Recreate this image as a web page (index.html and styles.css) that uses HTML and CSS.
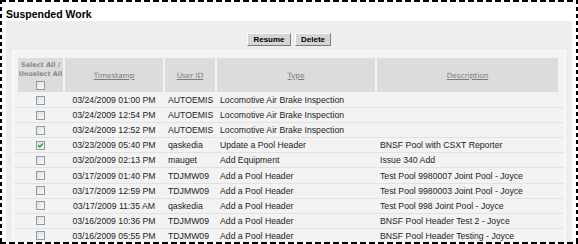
FILE: index.html
```html
<!DOCTYPE html>
<html>
<head>
<meta charset="utf-8">
<link rel="stylesheet" href="styles.css">
</head>
<body>
<div class="frame">
  <h1 class="title">Suspended Work</h1>
  <div class="panel">
    <div class="actions">
      <button class="btn btn-resume">Resume</button>
      <button class="btn btn-delete">Delete</button>
    </div>
    <div class="grid-box">
      <div class="row head">
        <div class="hcell hsel">
          <span class="sel-label">Select All /<br>Unselect All</span>
          <span class="cb"></span>
        </div>
        <div class="hcell"><a class="sort">Timestamp</a></div>
        <div class="hcell"><a class="sort">User ID</a></div>
        <div class="hcell"><a class="sort">Type</a></div>
        <div class="hcell"><a class="sort">Description</a></div>
      </div>
      <div class="row data"><div class="c-cb"><span class="cb"></span></div><div class="c-ts">03/24/2009 01:00 PM</div><div class="c-tx">AUTOEMIS</div><div class="c-tx">Locomotive Air Brake Inspection</div><div class="c-tx"></div></div>
      <div class="row data"><div class="c-cb"><span class="cb"></span></div><div class="c-ts">03/24/2009 12:54 PM</div><div class="c-tx">AUTOEMIS</div><div class="c-tx">Locomotive Air Brake Inspection</div><div class="c-tx"></div></div>
      <div class="row data"><div class="c-cb"><span class="cb"></span></div><div class="c-ts">03/24/2009 12:52 PM</div><div class="c-tx">AUTOEMIS</div><div class="c-tx">Locomotive Air Brake Inspection</div><div class="c-tx"></div></div>
      <div class="row data"><div class="c-cb"><span class="cb checked"><svg viewBox="0 0 7 7" width="7" height="7"><path d="M1 3.2 L2.8 5 L6 1.6" fill="none" stroke="#2a9a2a" stroke-width="1.4"/></svg></span></div><div class="c-ts">03/23/2009 05:40 PM</div><div class="c-tx">qaskedia</div><div class="c-tx">Update a Pool Header</div><div class="c-tx">BNSF Pool with CSXT Reporter</div></div>
      <div class="row data"><div class="c-cb"><span class="cb"></span></div><div class="c-ts">03/20/2009 02:13 PM</div><div class="c-tx">mauget</div><div class="c-tx">Add Equipment</div><div class="c-tx">Issue 340 Add</div></div>
      <div class="row data"><div class="c-cb"><span class="cb"></span></div><div class="c-ts">03/17/2009 01:40 PM</div><div class="c-tx">TDJMW09</div><div class="c-tx">Add a Pool Header</div><div class="c-tx">Test Pool 9980007 Joint Pool - Joyce</div></div>
      <div class="row data"><div class="c-cb"><span class="cb"></span></div><div class="c-ts">03/17/2009 12:59 PM</div><div class="c-tx">TDJMW09</div><div class="c-tx">Add a Pool Header</div><div class="c-tx">Test Pool 9980003 Joint Pool - Joyce</div></div>
      <div class="row data"><div class="c-cb"><span class="cb"></span></div><div class="c-ts">03/17/2009 11:35 AM</div><div class="c-tx">qaskedia</div><div class="c-tx">Add a Pool Header</div><div class="c-tx">Test Pool 998 Joint Pool - Joyce</div></div>
      <div class="row data"><div class="c-cb"><span class="cb"></span></div><div class="c-ts">03/16/2009 10:36 PM</div><div class="c-tx">TDJMW09</div><div class="c-tx">Add a Pool Header</div><div class="c-tx">BNSF Pool Header Test 2 - Joyce</div></div>
      <div class="row data"><div class="c-cb"><span class="cb"></span></div><div class="c-ts">03/16/2009 05:55 PM</div><div class="c-tx">TDJMW09</div><div class="c-tx">Add a Pool Header</div><div class="c-tx">BNSF Pool Header Testing - Joyce</div></div>
    </div>
  </div>
</div>
</body>
</html>
```
FILE: styles.css
```css
html, body {
  margin: 0;
  padding: 0;
  background: #fff;
}

.frame {
  width: 578px;
  height: 244px;
  box-sizing: border-box;
  padding: 8px 6px 2px 6px;
  display: flex;
  flex-direction: column;
  overflow: hidden;
  font-family: "Liberation Sans", Arial, sans-serif;
  background:
    repeating-linear-gradient(90deg, #000 0 6px, transparent 6px 9px) left top / 100% 2px no-repeat,
    repeating-linear-gradient(90deg, #000 0 6px, transparent 6px 9px) left bottom / 100% 2px no-repeat,
    repeating-linear-gradient(180deg, #000 0 4px, transparent 4px 7px) left top / 2px 100% no-repeat,
    repeating-linear-gradient(180deg, #000 0 4px, transparent 4px 7px) right top / 2px 100% no-repeat,
    #fff;
}

.title {
  margin: 0 0 1px 0;
  font-size: 10.5px;
  line-height: 12px;
  font-weight: bold;
  color: #000;
}

.panel {
  flex: 1;
  width: 566px;
  background: #eeeeee;
  overflow: hidden;
}

.actions {
  display: flex;
  justify-content: center;
  gap: 4px;
  padding-top: 12px;
  height: 13px;
}

.btn {
  height: 13px;
  padding: 0;
  margin: 0;
  box-sizing: border-box;
  background: #d5d5d5;
  border: 1px solid;
  border-color: #fbfbfb #7c7c7c #7c7c7c #fbfbfb;
  font-family: "Liberation Sans", Arial, sans-serif;
  font-weight: bold;
  font-size: 8px;
  line-height: 10px;
  color: #000;
}

.btn-resume { width: 44px; }
.btn-delete { width: 36px; }

.grid-box {
  margin: 4px 0 0 6px;
  width: 554px;
  box-sizing: border-box;
  background: #f3f3f3;
  border: 2px solid #f8f8f8;
  border-bottom: 0;
  padding-top: 6px;
}

.row {
  display: grid;
  grid-template-columns: 45px 98px 50px 158px 181px;
  column-gap: 2px;
  padding-left: 4px;
}

.head {
  height: 34px;
  margin-bottom: 1px;
}

.hcell {
  background: #dcdcdc;
  display: flex;
  align-items: center;
  justify-content: center;
}

.hsel {
  flex-direction: column;
  justify-content: flex-start;
  padding-top: 3px;
  box-sizing: border-box;
}

.sel-label {
  font-family: "DejaVu Sans", Verdana, sans-serif;
  font-weight: bold;
  font-size: 6.5px;
  line-height: 8.5px;
  color: #8a8a8a;
  text-align: center;
  white-space: nowrap;
}

.hsel .cb {
  margin-top: 3px;
}

.sort {
  font-family: "DejaVu Sans", Verdana, sans-serif;
  font-size: 7.3px;
  color: #7a7a7a;
  text-decoration: underline;
}

.data {
  height: 15.1px;
  box-sizing: border-box;
  border-bottom: 1px solid #e2e2e2;
  font-size: 8.7px;
  color: #222;
  align-items: center;
}

.c-cb {
  display: flex;
  justify-content: center;
  align-items: center;
  height: 100%;
}

.c-ts {
  text-align: center;
  white-space: nowrap;
}

.c-tx {
  padding-left: 3px;
  white-space: nowrap;
}

.cb {
  display: inline-flex;
  align-items: center;
  justify-content: center;
  width: 9px;
  height: 9px;
  box-sizing: border-box;
  border: 1px solid #8d9aa7;
  background: linear-gradient(135deg, #dedede, #fbfbfb);
}

.cb svg {
  display: block;
}
```
